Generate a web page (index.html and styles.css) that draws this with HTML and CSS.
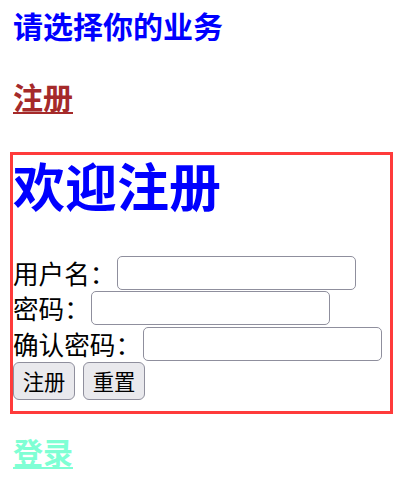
FILE: index.html
```html
<!DOCTYPE html>
<html lang="zh-CN">
<head>
<meta charset="utf-8">
<title>注册</title>
<link rel="stylesheet" href="styles.css">
</head>
<body>
<h3 class="title">请选择你的业务</h3>
<h3 class="nav"><a class="link-reg" href="#">注册</a></h3>
<div class="box">
  <h1 class="welcome">欢迎注册</h1>
  <form class="form">
    <div class="row"><label class="label">用户名：</label><input class="field" type="text"></div>
    <div class="row"><label class="label">密码：</label><input class="field" type="password"></div>
    <div class="row"><label class="label">确认密码：</label><input class="field" type="password"></div>
    <div class="actions"><button class="btn" type="submit">注册</button><button class="btn" type="reset">重置</button></div>
  </form>
</div>
<h3 class="nav nav-login"><a class="link-login" href="#">登录</a></h3>
</body>
</html>
```

FILE: styles.css
```css
html, body {
  margin: 0;
  background: #ffffff;
}
body {
  padding: 5px 13px 0 13px;
  font-family: "Noto Sans CJK SC", "Noto Sans", sans-serif;
  color: #000;
}
.title {
  margin: 0;
  font-size: 30px;
  line-height: 40px;
  font-weight: 700;
  color: #0000ff;
}
.nav {
  margin: 31px 0 0 0;
  font-size: 30px;
  line-height: 40px;
  font-weight: 700;
}
.link-reg {
  color: #a52a2a;
  text-decoration: underline;
  text-decoration-thickness: 2px;
  text-underline-offset: 3px;
}
.link-login {
  color: #7fffd4;
  text-decoration: underline;
  text-decoration-thickness: 2px;
  text-underline-offset: 3px;
}
.nav-login {
  margin-top: 17px;
}
.box {
  margin: 36px 0 0 -3px;
  width: 377px;
  border: 3px solid #ff3b3b;
  padding: 0 0 11px 0;
  box-sizing: content-box;
}
.welcome {
  margin: 0 0 40px 0;
  font-size: 52px;
  line-height: 60px;
  font-weight: 700;
  color: #0000ff;
}
.form {
  margin: 0;
}
.row {
  display: flex;
  align-items: center;
  height: 35.6px;
}
.label {
  font-size: 25.6px;
  line-height: 34px;
}
.field {
  margin: 0 0 0 1.6px;
  width: 239px;
  height: 34px;
  box-sizing: border-box;
  border: 1.6px solid #8f8f9d;
  border-radius: 5px;
  background: #fff;
  padding: 0 4px;
  font-size: 20px;
}
.actions {
  display: flex;
  gap: 8px;
  padding-top: 0.5px;
}
.btn {
  margin: 0;
  width: 62px;
  height: 37.5px;
  box-sizing: border-box;
  border: 1.6px solid #8f8f9d;
  border-radius: 6px;
  background: #e9e9ed;
  padding: 0;
  font-family: "Noto Sans CJK SC", "Noto Sans", sans-serif;
  font-size: 21.3px;
  line-height: 34px;
  color: #000;
}
```
